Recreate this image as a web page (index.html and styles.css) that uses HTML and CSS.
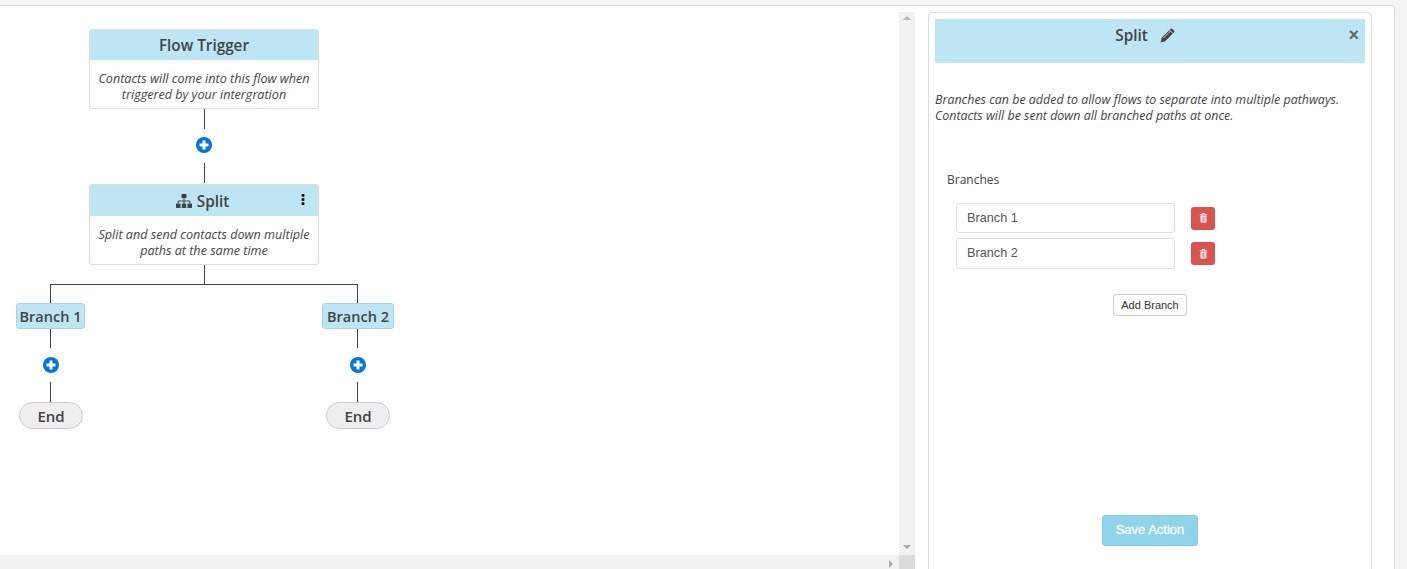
FILE: index.html
```html
<!DOCTYPE html>
<html lang="en">
<head>
<meta charset="utf-8">
<title>Flow editor</title>
<link rel="stylesheet" href="styles.css">
</head>
<body>
<div class="shell">
  <div class="workspace">
    <div class="canvas-pane">
      <div class="canvas">
        <div class="node card trigger">
          <div class="card-head">Flow Trigger</div>
          <div class="card-body">Contacts will come into this flow when triggered by your intergration</div>
        </div>
        <div class="wire v w1"></div>
        <svg class="node plus p1" viewBox="0 0 16 16"><circle cx="8" cy="8" r="8" fill="#0275d8"/><path d="M3.500 6.500h3v-3h3v3h3v3h-3v3h-3v-3h-3z" fill="#fff"/></svg>
        <div class="wire v w2"></div>
        <div class="node card split">
          <div class="card-head tall">
            <svg class="sitemap" viewBox="0 0 16 14"><path d="M5.500 0h5v4h-5zM0 9.500h4.500V14H0zM5.750 9.500h4.500V14h-4.500zM11.500 9.500H16V14h-4.500z" fill="#444"/><path d="M8 4v5.500M2.250 9.500V7h11.500v2.500" fill="none" stroke="#444"/></svg>
            <span>Split</span>
            <svg class="kebab" viewBox="0 0 4 12"><rect x=".5" y="0" width="3" height="3"/><rect x=".5" y="4.500" width="3" height="3"/><rect x=".5" y="9" width="3" height="3"/></svg>
          </div>
          <div class="card-body">Split and send contacts down multiple paths at the same time</div>
        </div>
        <div class="wire v w3"></div>
        <div class="wire h w4"></div>
        <div class="wire v w5"></div>
        <div class="wire v w6"></div>
        <div class="node branch b1">Branch 1</div>
        <div class="node branch b2">Branch 2</div>
        <div class="wire v w7"></div>
        <div class="wire v w8"></div>
        <svg class="node plus p2" viewBox="0 0 16 16"><circle cx="8" cy="8" r="8" fill="#0275d8"/><path d="M3.500 6.500h3v-3h3v3h3v3h-3v3h-3v-3h-3z" fill="#fff"/></svg>
        <svg class="node plus p3" viewBox="0 0 16 16"><circle cx="8" cy="8" r="8" fill="#0275d8"/><path d="M3.500 6.500h3v-3h3v3h3v3h-3v3h-3v-3h-3z" fill="#fff"/></svg>
        <div class="wire v w9"></div>
        <div class="wire v w10"></div>
        <div class="node end e1">End</div>
        <div class="node end e2">End</div>
      </div>
      <div class="scroll-v"><i class="arrow up"></i><i class="arrow down"></i></div>
      <div class="scroll-h"><i class="arrow right"></i></div>
      <div class="scroll-corner"></div>
    </div>
    <aside class="panel">
      <header class="panel-head">
        <span class="panel-title">Split</span>
        <svg class="pencil" viewBox="0 0 14 14"><path d="M0.500 13.500l1-4L9.300 1.700a1.200 1.200 0 0 1 1.700 0l1.300 1.300a1.200 1.200 0 0 1 0 1.700L4.500 12.500z" fill="#444"/><path d="M3 9.700L9.400 3.300M8.300 2.700l3 3" stroke="#bee5f3" stroke-width=".8"/></svg>
        <span class="close">×</span>
      </header>
      <p class="panel-desc">Branches can be added to allow flows to separate into multiple pathways.<br>Contacts will be sent down all branched paths at once.</p>
      <div class="field-label">Branches</div>
      <div class="rows">
        <div class="row">
          <input class="text-input" type="text" value="Branch 1">
          <button class="del" type="button"><svg viewBox="0 0 10 11"><path d="M3.500 1.500V.5h3v1M.8 2h8.400" fill="none" stroke="#fff"/><path d="M1.700 3h6.600v7.500H1.700z" fill="#fff"/><path d="M3.500 4v5.500M5 4v5.500M6.500 4v5.500" stroke="#d9534f" stroke-width=".7"/></svg></button>
        </div>
        <div class="row second">
          <input class="text-input" type="text" value="Branch 2">
          <button class="del" type="button"><svg viewBox="0 0 10 11"><path d="M3.500 1.500V.5h3v1M.8 2h8.400" fill="none" stroke="#fff"/><path d="M1.700 3h6.600v7.500H1.700z" fill="#fff"/><path d="M3.500 4v5.500M5 4v5.500M6.500 4v5.500" stroke="#d9534f" stroke-width=".7"/></svg></button>
        </div>
      </div>
      <div class="add-wrap"><button class="add" type="button">Add Branch</button></div>
      <div class="save-wrap"><button class="save" type="button">Save Action</button></div>
    </aside>
  </div>
</div>
</body>
</html>
```

FILE: styles.css
```css
* { box-sizing: border-box; }
html, body { margin: 0; height: 100%; overflow: hidden; }
body {
  background: #f5f5f5;
  font-family: "Open Sans", "Liberation Sans", sans-serif;
  color: #444;
  padding-top: 5px;
}
.shell {
  height: 564px;
  width: 1395px;
  overflow: hidden;
  background: #fff;
  border-top: 1px solid #ddd;
  border-right: 1px solid #ddd;
  border-top-right-radius: 4px;
  padding-top: 6px;
}
.workspace { display: flex; height: 100%; }

.canvas-pane {
  width: 915px;
  margin-top: -6px;
  height: 563px;
  display: grid;
  grid-template-columns: 899px 16px;
  grid-template-rows: 549px 14px;
}
.canvas { position: relative; overflow: hidden; background: #fff; }
.scroll-v { background: #f1f1f1; position: relative; margin-top: 6px; }
.scroll-h { background: #f1f1f1; position: relative; }
.scroll-corner { background: #dcdcdc; }
.arrow { position: absolute; width: 0; height: 0; border-style: solid; border-color: transparent; }
.arrow.up { top: 4px; left: 4px; border-width: 0 4px 4px; border-bottom-color: #b5b5b5; }
.arrow.down { bottom: 6px; left: 4px; border-width: 4px 4px 0; border-top-color: #a8a8a8; }
.arrow.right { right: 6px; top: 5px; border-width: 4px 0 4px 4px; border-left-color: #a8a8a8; }

/* Diagram: offsets relative to canvas whose top is y=6 */
.node { position: absolute; }
.wire { position: absolute; background: #444; }
.wire.v { width: 1px; }
.wire.h { height: 1px; }
.card {
  left: 89px;
  width: 230px;
  background: #fff;
  border: 1px solid #ddd;
  border-radius: 3px;
  text-align: center;
}
.trigger { top: 23px; height: 80px; }
.split { top: 178px; height: 81px; }
.card-head {
  background: #bee5f3;
  height: 30px;
  font-size: 15.300px;
  font-weight: 600;
  line-height: 30px;
  position: relative;
}
.card-head.tall {
  height: 31px;
  display: flex;
  align-items: center;
  justify-content: center;
  gap: 5px;
  padding-right: 3px;
}
.card-body {
  font-size: 12.600px;
  font-style: italic;
  line-height: 16px;
  padding: 11px 4px 0;
}
.sitemap { width: 16px; height: 14px; }
.kebab { position: absolute; top: 9px; right: 13px; width: 4px; height: 11px; fill: #111; }
.w1 { left: 204px; top: 103px; height: 20px; }
.w2 { left: 204px; top: 157px; height: 20px; }
.w3 { left: 204px; top: 259px; height: 19px; }
.w4 { left: 50px; top: 278px; width: 308px; }
.w5 { left: 50px; top: 278px; height: 19px; }
.w6 { left: 357px; top: 278px; height: 19px; }
.w7 { left: 50px; top: 323px; height: 19px; }
.w8 { left: 357px; top: 323px; height: 19px; }
.w9 { left: 50px; top: 376px; height: 20px; }
.w10 { left: 357px; top: 376px; height: 20px; }
.plus { width: 16px; height: 16px; }
.p1 { left: 196px; top: 131px; }
.p2 { left: 43px; top: 351px; }
.p3 { left: 350px; top: 351px; }
.branch {
  top: 297px;
  height: 26px;
  background: #bee5f3;
  border: 1px solid #a9d5e6;
  border-radius: 3px;
  font-size: 14.500px;
  font-weight: 600;
  line-height: 26px;
  text-align: center;
}
.b1 { left: 16px; width: 69px; }
.b2 { left: 322px; width: 72px; }
.end {
  top: 396px;
  width: 64px;
  height: 27px;
  background: #eee;
  border: 1px solid #ccc;
  border-radius: 14px;
  font-size: 15px;
  font-weight: 600;
  line-height: 26px;
  text-align: center;
}
.e1 { left: 19px; }
.e2 { left: 326px; }

/* Side panel */
.panel {
  margin-left: 13px;
  width: 444px;
  height: 600px;
  border: 1px solid #ddd;
  border-radius: 4px;
  padding: 6px;
  position: relative;
}
.panel-head {
  height: 44px;
  background: #bee5f3;
  display: flex;
  justify-content: center;
  align-items: flex-start;
  padding: 6px 9px 0 0;
  position: relative;
  gap: 12px;
}
.panel-title { font-size: 15.300px; font-weight: 600; line-height: 20px; }
.pencil { width: 16px; height: 16px; margin-top: 2px; }
.close {
  position: absolute;
  right: 6px;
  top: 5px;
  font-family: "Liberation Sans", sans-serif;
  font-size: 18px;
  font-weight: 700;
  line-height: 22px;
  color: #666;
}
.panel-desc {
  margin: 29px 0 0;
  font-size: 12.450px;
  font-style: italic;
  line-height: 15.500px;
}
.field-label { margin: 49px 0 0 12px; font-size: 12px; line-height: 16px; }
.rows { margin: 15px 0 0 21px; }
.row { display: flex; align-items: center; gap: 16px; height: 30px; }
.row.second { margin-top: 5px; height: 31px; }
.row.second .text-input { padding-bottom: 2px; }
.text-input {
  width: 219px;
  height: 100%;
  border: 1px solid #ddd;
  border-radius: 3px;
  padding: 0 10px;
  font-family: "Liberation Sans", sans-serif;
  font-size: 12.700px;
  color: #555;
  background: #fff;
  outline: none;
}
.del {
  width: 24px;
  height: 23px;
  padding: 0;
  border: 0;
  border-radius: 3px;
  background: #d9534f;
  display: flex;
  align-items: center;
  justify-content: center;
}
.del svg { width: 9px; height: 10px; }
.add-wrap { margin-top: 25px; display: flex; justify-content: center; }
.add {
  width: 74px;
  height: 22px;
  padding: 0;
  border: 1px solid #ccc;
  border-radius: 3px;
  background: #fff;
  font-family: "Liberation Sans", sans-serif;
  font-size: 11px;
  color: #333;
}
.save-wrap { margin-top: 199px; display: flex; justify-content: center; }
.save {
  width: 96px;
  height: 31px;
  padding: 0 0 2px;
  border: 1px solid #46b8da;
  border-radius: 3px;
  background: #5bc0de;
  opacity: .68;
  font-family: "Liberation Sans", sans-serif;
  font-size: 13px;
  font-weight: 400;
  -webkit-text-stroke: .3px #fff;
  color: #fff;
}
```
